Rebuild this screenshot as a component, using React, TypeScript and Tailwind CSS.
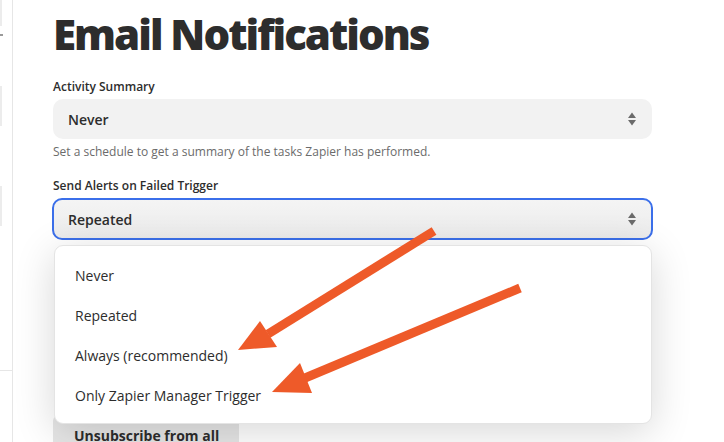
const SortIcon = () => (
  <svg width="10" height="16" viewBox="0 0 10 16" className="shrink-0">
    <path d="M5 1.5 L9 7 H1 Z" fill="#6b6b6b" />
    <path d="M5 14.5 L9 9 H1 Z" fill="#6b6b6b" />
  </svg>
)

const options = ['Never', 'Repeated', 'Always (recommended)', 'Only Zapier Manager Trigger']

const Arrows = () => (
  <svg className="absolute inset-0 pointer-events-none" width="724" height="442" viewBox="0 0 724 442">
    <line x1="434" y1="231" x2="268" y2="334" stroke="#ee5a29" strokeWidth="9" />
    <polygon points="260,321 277,347 238,350" fill="#ee5a29" />
    <line x1="520" y1="288" x2="305" y2="378" stroke="#ee5a29" strokeWidth="9" />
    <polygon points="300,363 312,393 272,392" fill="#ee5a29" />
  </svg>
)

export default function App() {
  return (
    <div
      className="relative w-[724px] h-[442px] overflow-hidden bg-white flex text-[#2d2d2d]"
      style={{ fontFamily: '"Open Sans", "Liberation Sans", sans-serif' }}
    >
      {/* sidebar edge */}
      <aside className="w-[13px] h-full border-r border-[#e6e6e6] flex flex-col shrink-0">
        <div className="h-[26px] w-[2px] bg-[#ececec]" />
        <div className="mt-[8px] h-[2px] w-[3px] bg-[#9a9a9a]" />
        <div className="mt-[50px] h-[40px] w-[2px] bg-[#ececec]" />
        <div className="mt-[60px] h-[40px] w-[2px] bg-[#ececec]" />
        <div className="mt-[144px] h-px w-full bg-[#e6e6e6]" />
      </aside>

      <main className="flex-1 pl-[40px] pr-[72px]">
        <h1 className="text-[42px] leading-none font-extrabold tracking-[-2px] mt-[13px]">Email Notifications</h1>

        <label className="block mt-[23px] text-[12px] font-semibold leading-[18px]">Activity Summary</label>
        <div className="mt-[3px] h-[40px] rounded-[10px] bg-[#f2f2f2] flex items-center justify-between pl-[15px] pr-[15px]">
          <span className="text-[14px] font-semibold">Never</span>
          <SortIcon />
        </div>
        <p className="mt-[4px] text-[12px] leading-[18px] text-[#6b6b6b]">
          Set a schedule to get a summary of the tasks Zapier has performed.
        </p>

        <label className="block mt-[16px] text-[12px] font-semibold leading-[18px]">Send Alerts on Failed Trigger</label>
        <div className="mt-[3px] -mx-px h-[42px] rounded-[10px] border-2 border-[#3b6fea] bg-gradient-to-b from-[#f4f4f4] to-[#ececec] flex items-center justify-between pl-[14px] pr-[14px]">
          <span className="text-[14px] font-semibold">Repeated</span>
          <SortIcon />
        </div>

        <button className="mt-[175px] h-[40px] w-[186px] bg-[#e6e6e6] text-left pl-[21px] text-[14px] font-bold rounded-[6px]">
          Unsubscribe from all
        </button>
      </main>

      {/* open dropdown */}
      <ul className="absolute left-[54px] top-[245px] w-[598px] h-[179px] bg-white rounded-[9px] border border-[#e4e4e4] shadow-[0_8px_40px_rgba(0,0,0,0.16)] pt-[9px]">
        {options.map(o => (
          <li key={o} className="h-[40px] flex items-center pl-[20px] text-[14px]">{o}</li>
        ))}
      </ul>

      <Arrows />
    </div>
  )
}
